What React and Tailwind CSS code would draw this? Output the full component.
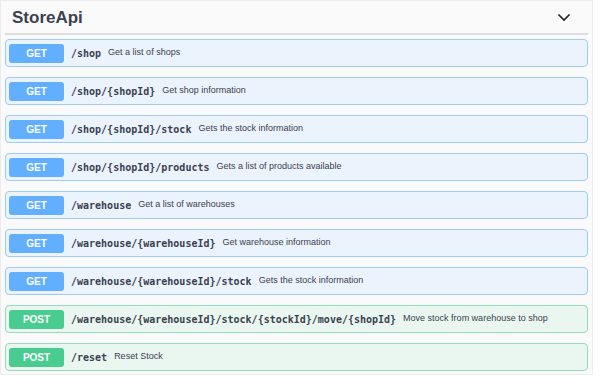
const endpoints = [
  { method: 'GET', path: '/shop', desc: 'Get a list of shops' },
  { method: 'GET', path: '/shop/{shopId}', desc: 'Get shop information' },
  { method: 'GET', path: '/shop/{shopId}/stock', desc: 'Gets the stock information' },
  { method: 'GET', path: '/shop/{shopId}/products', desc: 'Gets a list of products available' },
  { method: 'GET', path: '/warehouse', desc: 'Get a list of warehouses' },
  { method: 'GET', path: '/warehouse/{warehouseId}', desc: 'Get warehouse information' },
  { method: 'GET', path: '/warehouse/{warehouseId}/stock', desc: 'Gets the stock information' },
  {
    method: 'POST',
    path: '/warehouse/{warehouseId}/stock/{stockId}/move/{shopId}',
    desc: 'Move stock from warehouse to shop',
  },
  { method: 'POST', path: '/reset', desc: 'Reset Stock' },
];

function Row({ method, path, desc }) {
  const isGet = method === 'GET';
  return (
    <div
      className={
        isGet
          ? 'flex items-center h-[28px] pl-[3px] rounded-[4px] border border-[#9fcbf8] bg-[#ebf3fc]'
          : 'flex items-center h-[28px] pl-[3px] rounded-[4px] border border-[#94dcbb] bg-[#e9f7f0]'
      }
    >
      <span
        className={
          isGet
            ? 'w-[55px] h-[19px] rounded-[3px] bg-[#61affe] text-white text-[10px] font-bold flex items-center justify-center'
            : 'w-[55px] h-[19px] rounded-[3px] bg-[#49cc90] text-white text-[10px] font-bold flex items-center justify-center'
        }
      >
        {method}
      </span>
      <span className="ml-[7px] text-[10px] font-bold text-[#3b4151] font-['DejaVu_Sans_Mono',monospace]">
        {path}
      </span>
      <span className="ml-[7px] text-[9px] text-[#3b4151]">{desc}</span>
    </div>
  );
}

export default function App() {
  return (
    <div className="w-[600px] h-[377px] bg-white font-['Liberation_Sans',Arial,sans-serif]">
      <div className="w-[593px] h-[375px] bg-[#fafafa] border border-[#ececec] px-[4px]">
        <div className="h-[34px] flex items-center justify-between pl-[7px] pr-[17px] pt-[1px] border-b-2 border-[#dddddd]">
          <h2 className="text-[17px] font-bold text-[#3b4151]">StoreApi</h2>
          <svg width="14" height="9" viewBox="0 0 14 9" fill="none">
            <path d="M1.5 1.5 L7 7 L12.5 1.5" stroke="#1f1f1f" strokeWidth="1.6" />
          </svg>
        </div>
        <div className="flex flex-col gap-[10px] pt-[4px]">
          {endpoints.map((e) => (
            <Row key={e.method + e.path} {...e} />
          ))}
        </div>
      </div>
    </div>
  );
}
